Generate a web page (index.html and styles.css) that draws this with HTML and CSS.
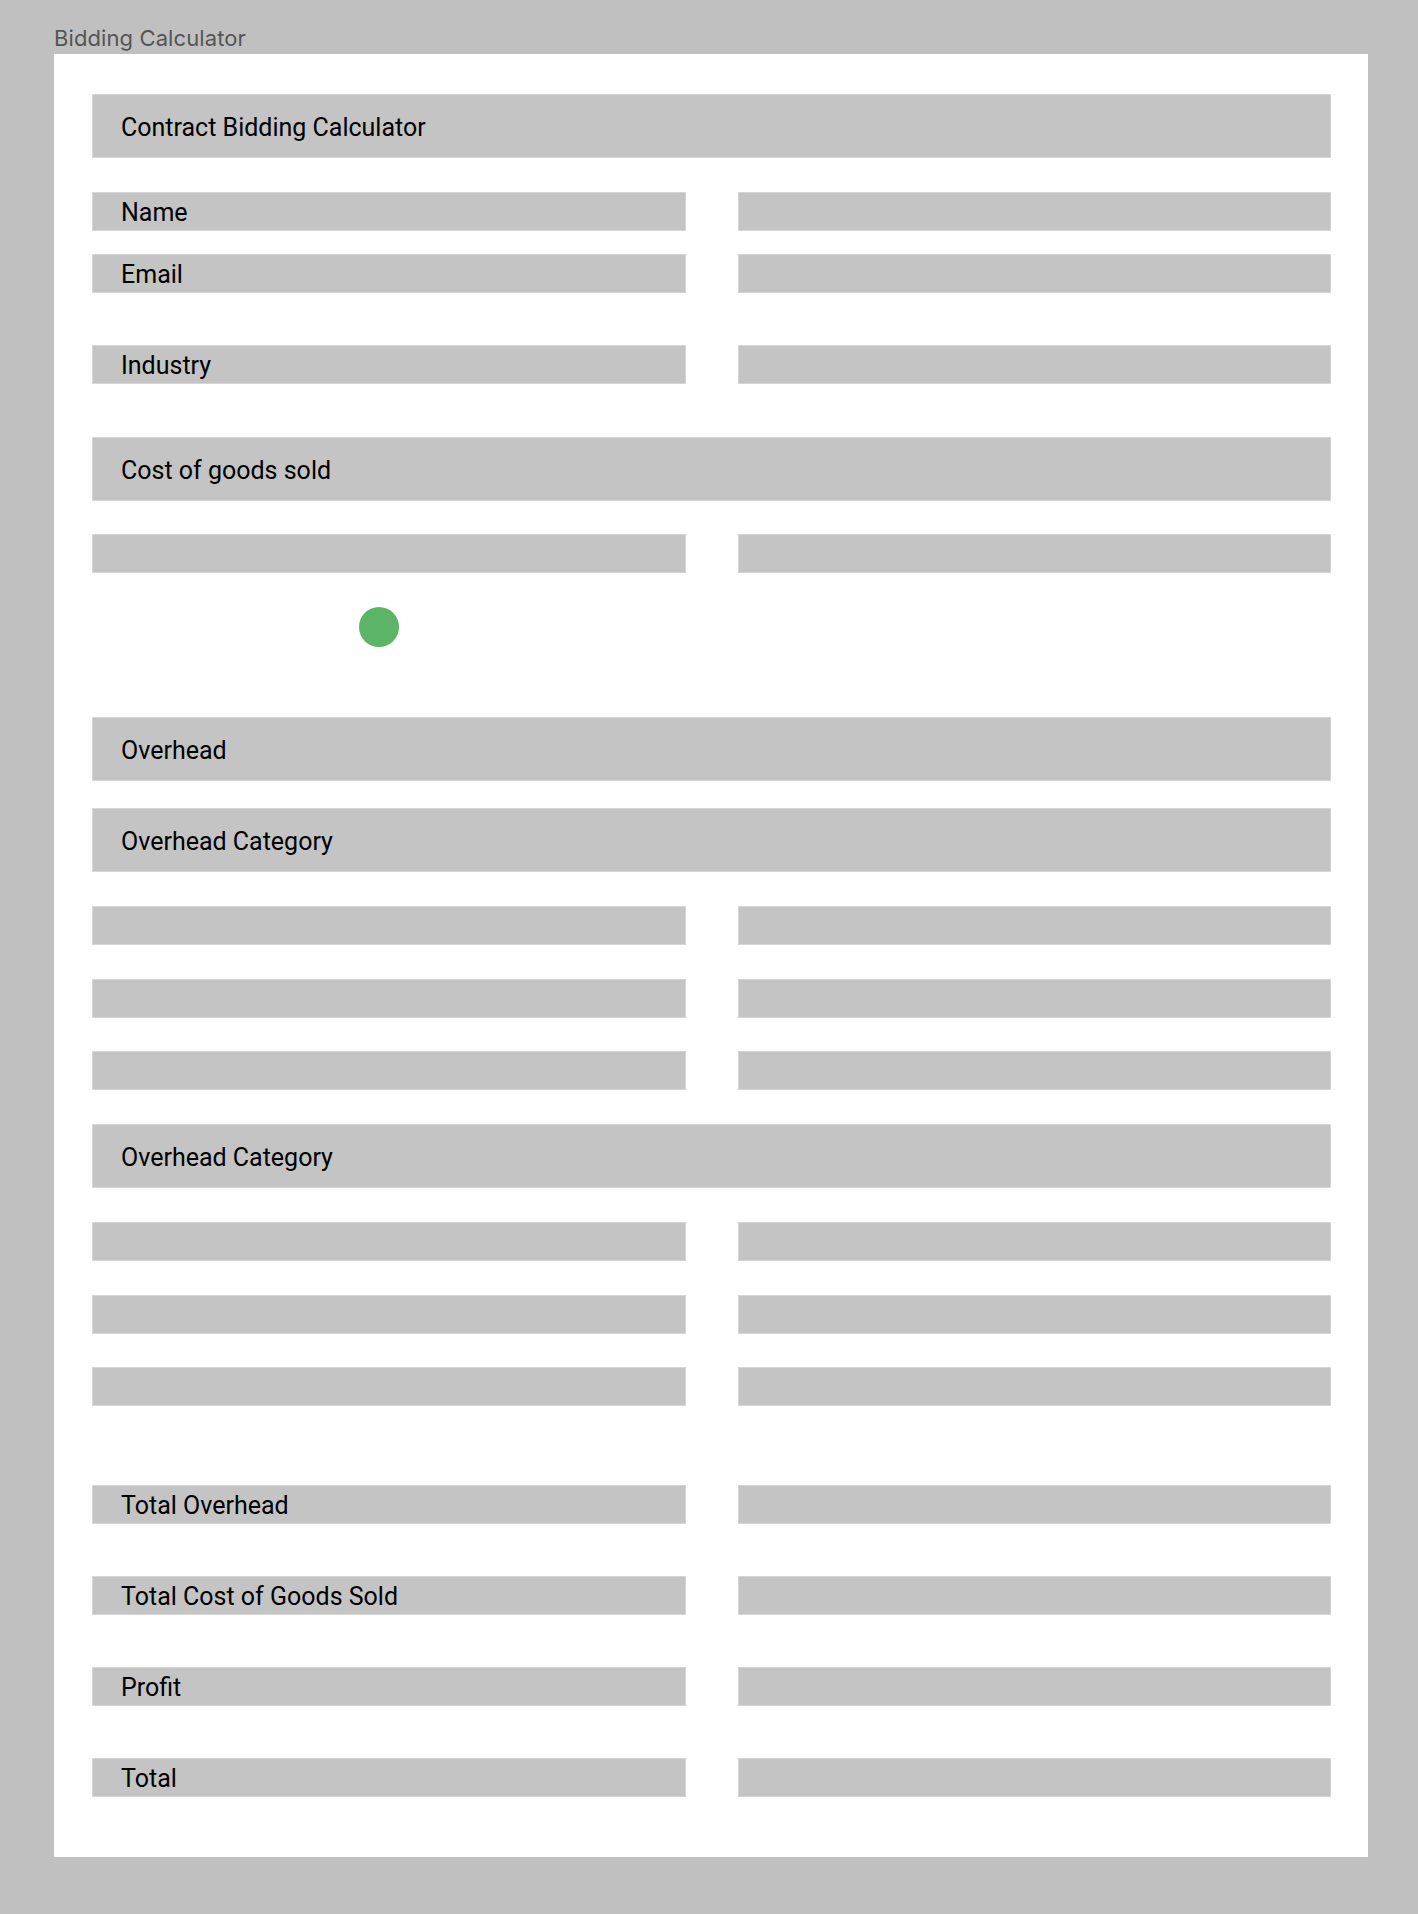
FILE: index.html
```html
<!DOCTYPE html>
<html lang="en">
<head>
<meta charset="utf-8">
<title>Bidding Calculator</title>
<link rel="stylesheet" href="styles.css">
</head>
<body>
<div class="page-title">Bidding Calculator</div>
<main class="frame">
  <div class="bar bar-lg">Contract Bidding Calculator</div>

  <div class="pair mt-34"><div class="bar">Name</div><div class="bar"></div></div>
  <div class="pair mt-23"><div class="bar">Email</div><div class="bar"></div></div>
  <div class="pair mt-52"><div class="bar">Industry</div><div class="bar"></div></div>

  <div class="bar bar-lg mt-53">Cost of goods sold</div>
  <div class="pair mt-33"><div class="bar"></div><div class="bar"></div></div>
  <div class="dot-row mt-34"><span class="dot"></span></div>

  <div class="bar bar-lg mt-70">Overhead</div>
  <div class="bar bar-lg mt-27">Overhead Category</div>
  <div class="group mt-34">
    <div class="pair"><div class="bar"></div><div class="bar"></div></div>
    <div class="pair"><div class="bar"></div><div class="bar"></div></div>
    <div class="pair"><div class="bar"></div><div class="bar"></div></div>
  </div>
  <div class="bar bar-lg mt-34">Overhead Category</div>
  <div class="group mt-34">
    <div class="pair"><div class="bar"></div><div class="bar"></div></div>
    <div class="pair"><div class="bar"></div><div class="bar"></div></div>
    <div class="pair"><div class="bar"></div><div class="bar"></div></div>
  </div>

  <div class="pair mt-79"><div class="bar">Total Overhead</div><div class="bar"></div></div>
  <div class="pair mt-52"><div class="bar">Total Cost of Goods Sold</div><div class="bar"></div></div>
  <div class="pair mt-52"><div class="bar">Profit</div><div class="bar"></div></div>
  <div class="pair mt-52"><div class="bar">Total</div><div class="bar"></div></div>
</main>
</body>
</html>
```

FILE: styles.css
```css
* { box-sizing: border-box; }

html, body {
  margin: 0;
  background: #c0c0c0;
}

body {
  padding: 25px 50px 55px 54px;
  font-family: Roboto, "Liberation Sans", sans-serif;
}

.page-title {
  font-family: Inter, "Liberation Sans", sans-serif;
  font-size: 22px;
  line-height: 26px;
  color: #555555;
  margin-bottom: 3px;
  letter-spacing: 0.1px;
}

.frame {
  width: 1314px;
  background: #ffffff;
  padding: 40px 37px 60px 38px;
  display: flex;
  flex-direction: column;
}

.bar {
  height: 39px;
  background: #c4c4c4;
  border: 1px solid #d6d6d6;
  padding-left: 28px;
  padding-top: 2px;
  display: flex;
  align-items: center;
  font-size: 25px;
  color: #000000;
  white-space: nowrap;
}

.bar-lg {
  height: 64px;
}

.pair {
  display: grid;
  grid-template-columns: 1fr 1fr;
  column-gap: 52px;
}

.group {
  display: flex;
  flex-direction: column;
  gap: 33.5px;
}

.dot-row {
  height: 40px;
  padding-left: 267px;
}

.dot {
  display: block;
  width: 40px;
  height: 40px;
  border-radius: 50%;
  background: #5cb466;
}

.mt-23 { margin-top: 23px; }
.mt-27 { margin-top: 27px; }
.mt-33 { margin-top: 33px; }
.mt-34 { margin-top: 34px; }
.mt-52 { margin-top: 52px; }
.mt-53 { margin-top: 53px; }
.mt-70 { margin-top: 70px; }
.mt-79 { margin-top: 79px; }
```
